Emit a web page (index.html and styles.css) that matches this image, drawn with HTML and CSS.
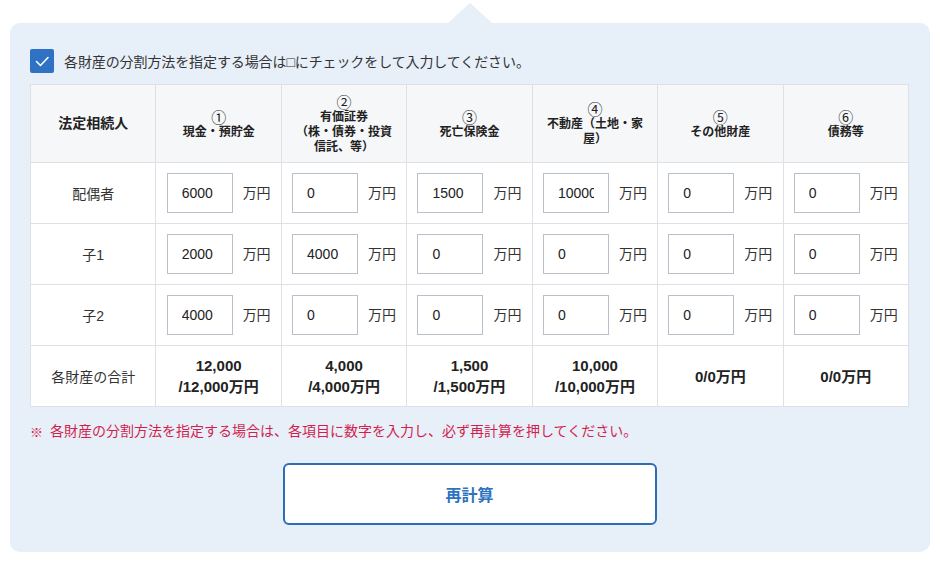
FILE: index.html
```html
<!DOCTYPE html>
<html lang="ja">
<head>
<meta charset="utf-8">
<title>遺産分割</title>
<link rel="stylesheet" href="styles.css">
</head>
<body>
<div class="wrap">
  <div class="panel">
    <span class="pointer"></span>
    <label class="check-row">
      <span class="checkbox"><svg width="24" height="24" viewBox="0 0 24 24"><polyline points="6.5,12.5 10.5,16.5 18,8.5" fill="none" stroke="#fff" stroke-width="1.6" stroke-linecap="round" stroke-linejoin="round"/></svg></span>
      <span class="check-text">各財産の分割方法を指定する場合は□にチェックをして入力してください。</span>
    </label>
    <table class="grid">
      <thead>
        <tr>
          <th class="first">法定相続人</th>
          <th><span class="num">①</span>現金・預貯金</th>
          <th><span class="num">②</span>有価証券<br>（株・債券・投資信託、等）</th>
          <th><span class="num">③</span>死亡保険金</th>
          <th><span class="num">④</span>不動産（土地・家屋）</th>
          <th><span class="num">⑤</span>その他財産</th>
          <th><span class="num">⑥</span>債務等</th>
        </tr>
      </thead>
      <tbody>
        <tr>
          <td class="label">配偶者</td>
          <td><div class="field"><input class="amount" value="6000"><span class="unit">万円</span></div></td>
          <td><div class="field"><input class="amount" value="0"><span class="unit">万円</span></div></td>
          <td><div class="field"><input class="amount" value="1500"><span class="unit">万円</span></div></td>
          <td><div class="field"><input class="amount" value="10000"><span class="unit">万円</span></div></td>
          <td><div class="field"><input class="amount" value="0"><span class="unit">万円</span></div></td>
          <td><div class="field"><input class="amount" value="0"><span class="unit">万円</span></div></td>
        </tr>
        <tr>
          <td class="label">子1</td>
          <td><div class="field"><input class="amount" value="2000"><span class="unit">万円</span></div></td>
          <td><div class="field"><input class="amount" value="4000"><span class="unit">万円</span></div></td>
          <td><div class="field"><input class="amount" value="0"><span class="unit">万円</span></div></td>
          <td><div class="field"><input class="amount" value="0"><span class="unit">万円</span></div></td>
          <td><div class="field"><input class="amount" value="0"><span class="unit">万円</span></div></td>
          <td><div class="field"><input class="amount" value="0"><span class="unit">万円</span></div></td>
        </tr>
        <tr>
          <td class="label">子2</td>
          <td><div class="field"><input class="amount" value="4000"><span class="unit">万円</span></div></td>
          <td><div class="field"><input class="amount" value="0"><span class="unit">万円</span></div></td>
          <td><div class="field"><input class="amount" value="0"><span class="unit">万円</span></div></td>
          <td><div class="field"><input class="amount" value="0"><span class="unit">万円</span></div></td>
          <td><div class="field"><input class="amount" value="0"><span class="unit">万円</span></div></td>
          <td><div class="field"><input class="amount" value="0"><span class="unit">万円</span></div></td>
        </tr>
        <tr>
          <td class="label">各財産の合計</td>
          <td class="total">12,000<br>/12,000万円</td>
          <td class="total">4,000<br>/4,000万円</td>
          <td class="total">1,500<br>/1,500万円</td>
          <td class="total">10,000<br>/10,000万円</td>
          <td class="total">0/0万円</td>
          <td class="total">0/0万円</td>
        </tr>
      </tbody>
    </table>
    <p class="note"><span class="mark">※</span>各財産の分割方法を指定する場合は、各項目に数字を入力し、必ず再計算を押してください。</p>
    <button class="recalc" type="button">再計算</button>
  </div>
</div>
</body>
</html>
```

FILE: styles.css
```css
* { box-sizing: border-box; }

html, body {
  margin: 0;
  padding: 0;
  background: #ffffff;
}

body {
  font-family: "Liberation Sans", "Noto Sans CJK JP", sans-serif;
  color: #333333;
}

.wrap {
  padding: 23px 10px 0 10px;
}

.panel {
  position: relative;
  background: #e7eff9;
  border-radius: 10px;
  padding: 26px 21px 27px 20px;
  display: flex;
  flex-direction: column;
}

.pointer {
  position: absolute;
  top: -20px;
  left: 438px;
  width: 0;
  height: 0;
  border-left: 22px solid transparent;
  border-right: 22px solid transparent;
  border-bottom: 20px solid #e7eff9;
}

.check-row {
  display: flex;
  align-items: center;
  gap: 10px;
  height: 24px;
}

.checkbox {
  width: 24px;
  height: 24px;
  background: #2f72c4;
  border-radius: 2px;
  display: flex;
}

.check-text {
  font-size: 14px;
  color: #333333;
  letter-spacing: -0.1px;
}

.grid {
  margin-top: 11px;
  width: 879px;
  table-layout: fixed;
  border-collapse: collapse;
  background: #ffffff;
}

.grid th,
.grid td {
  border: 1px solid #dde1e6;
  text-align: center;
  vertical-align: middle;
}

.grid th {
  background: #f6f7f9;
  height: 78px;
  padding: 0 10px;
  font-size: 12px;
  line-height: 15px;
  font-weight: bold;
  color: #222222;
}

.grid th.first {
  font-size: 14px;
}

.num {
  display: block;
  font-family: "Noto Sans CJK JP", sans-serif;
  font-size: 15px;
  font-weight: normal;
  line-height: 17px;
}

.grid td {
  height: 61px;
  padding: 0;
}

.label {
  font-size: 14px;
  color: #333333;
}

.field {
  display: flex;
  align-items: center;
  justify-content: center;
  gap: 10px;
}

.amount {
  width: 66px;
  height: 40px;
  border: 1px solid #b9c0c9;
  border-radius: 0;
  padding: 0 14px;
  margin: 0;
  font-family: "Liberation Sans", "Noto Sans CJK JP", sans-serif;
  font-size: 14px;
  color: #222222;
  background: #ffffff;
  outline: none;
}

.unit {
  font-size: 14px;
  color: #333333;
  width: 28px;
  white-space: nowrap;
  margin-top: -3px;
}

.total {
  font-size: 15px;
  line-height: 21px;
  font-weight: bold;
  color: #222222;
}

.note {
  margin: 14px 0 0 0;
  height: 20px;
  font-size: 14px;
  line-height: 20px;
  color: #d21f4e;
  display: flex;
  align-items: center;
}

.mark {
  font-family: "Noto Sans CJK JP", sans-serif;
  font-size: 13px;
  line-height: 20px;
  font-weight: 900;
  width: 20px;
  padding-top: 2px;
}

.recalc {
  align-self: center;
  margin-top: 22px;
  width: 374px;
  height: 62px;
  background: #ffffff;
  border: 2px solid #2d6db6;
  border-radius: 6px;
  font-family: "Liberation Sans", "Noto Sans CJK JP", sans-serif;
  font-size: 16px;
  font-weight: bold;
  color: #2e73c0;
  cursor: pointer;
}
```
